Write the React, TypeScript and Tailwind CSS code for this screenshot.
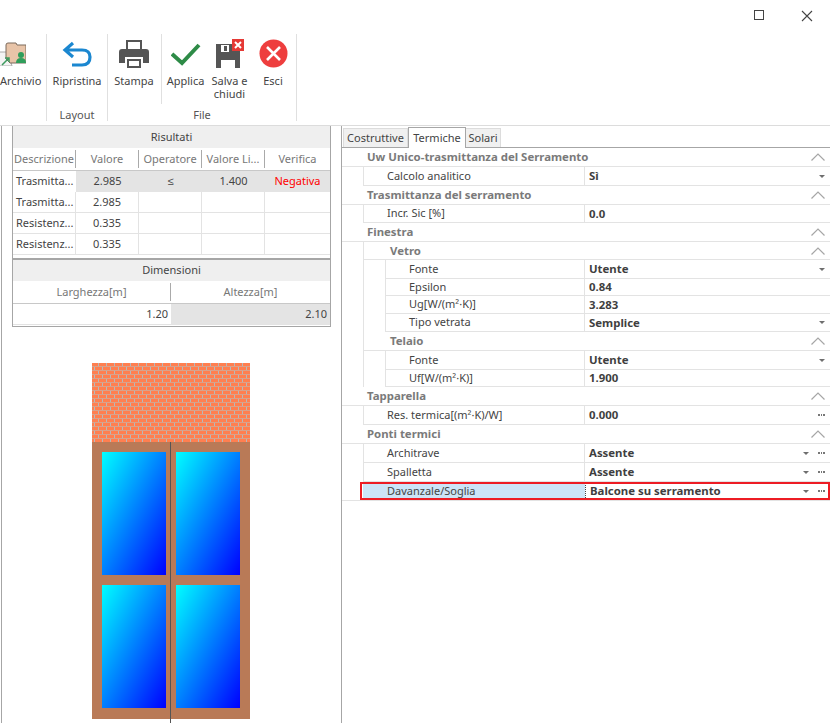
import React from "react";

const font = { fontFamily: '"Noto Sans", sans-serif' };

const results = [
  { d: "Trasmitta...", v: "2.985", o: "≤", l: "1.400", r: "Negativa", sel: true },
  { d: "Trasmitta...", v: "2.985", o: "", l: "", r: "" },
  { d: "Resistenz...", v: "0.335", o: "", l: "", r: "" },
  { d: "Resistenz...", v: "0.335", o: "", l: "", r: "" },
];

function Chevron() {
  return (
    <svg width="14" height="8" viewBox="0 0 14 8" className="mr-[5px] shrink-0">
      <path d="M0.5 7.5 L7 1 L13.5 7.5" fill="none" stroke="#a6a6a6" strokeWidth="1.2" />
    </svg>
  );
}

function Caret() {
  return <span className="w-0 h-0 border-x-[3px] border-x-transparent border-t-[3px] border-t-[#6e6e6e]" />;
}

function Dots() {
  return (
    <span className="flex gap-px w-[7px]">
      <span className="w-[2px] h-[2px] bg-[#777]" />
      <span className="w-[2px] h-[2px] bg-[#777]" />
      <span className="w-[2px] h-[2px] bg-[#777]" />
    </span>
  );
}

function Cat({ label, level = 0, h }: { label: string; level?: number; h: string }) {
  return (
    <div className={`flex items-center ${h} border-b border-[#e3e3e3] ${level ? "ml-[21px] border-l pl-[26px]" : "pl-[25px]"}`}>
      <span className="flex-1 font-bold text-[11.4px] text-[#7a7a7a]">{label}</span>
      <Chevron />
    </div>
  );
}

function Row({ label, value, level = 0, h, caret, dots }: { label: string; value: string; level?: number; h: string; caret?: boolean; dots?: boolean }) {
  return (
    <div className={`flex ${h} ${level ? "ml-[21px] border-l border-[#e3e3e3]" : ""}`}>
      <div className="ml-[21px] flex flex-1 border-l border-b border-[#e3e3e3]">
        <div className={`flex items-center border-r border-[#e3e3e3] ${level ? "w-[199px] pl-[23px]" : "w-[221px] pl-[23px]"} text-[#444]`}>{label}</div>
        <div className="flex flex-1 items-center pl-[4px] font-bold text-[11.4px] text-[#3f3f3f]">
          <span className="flex-1">{value}</span>
          <span className="flex items-center gap-[9px] pr-[5px]">
            {caret && <Caret />}
            {dots && <Dots />}
          </span>
        </div>
      </div>
    </div>
  );
}

function Tool({ label, icon, w }: { label: string; icon: React.ReactNode; w: string }) {
  return (
    <div className={`flex flex-col items-center ${w}`}>
      <div className="h-[31px] mt-[4px] flex items-center justify-center">{icon}</div>
      <div className="mt-[5px] text-center leading-[13px] text-[#444]">{label}</div>
    </div>
  );
}

function WindowDrawing() {
  return (
    <svg width="158" height="361" viewBox="0 0 158 361" className="block" shapeRendering="crispEdges">
      <defs>
        <pattern id="brick" width="8" height="8" patternUnits="userSpaceOnUse">
          <rect width="8" height="8" fill="#ff7f50" />
          <rect y="3" width="8" height="1" fill="#d8a28c" />
          <rect y="7" width="8" height="1" fill="#d8a28c" />
          <rect x="6" y="0" width="1" height="3" fill="#b8b8b8" />
          <rect x="2" y="4" width="1" height="3" fill="#b8b8b8" />
        </pattern>
        <linearGradient id="glass" x1="0" y1="0" x2="1" y2="1">
          <stop offset="0" stopColor="#00ffff" />
          <stop offset="1" stopColor="#0000ff" />
        </linearGradient>
      </defs>
      <rect width="158" height="79" fill="url(#brick)" />
      <rect y="79" width="158" height="277" fill="#b97a57" />
      <rect x="78" y="79" width="1" height="282" fill="#555" />
      <rect x="10" y="89" width="64" height="123" fill="url(#glass)" />
      <rect x="84" y="89" width="64" height="123" fill="url(#glass)" />
      <rect x="10" y="222" width="64" height="123" fill="url(#glass)" />
      <rect x="84" y="222" width="64" height="123" fill="url(#glass)" />
    </svg>
  );
}

export default function App() {
  return (
    <div className="w-[830px] h-[723px] overflow-hidden bg-white text-[11px] flex flex-col" style={font}>
      {/* title bar + ribbon */}
      <div className="h-[126px] shrink-0 border-b border-[#dcdcdc]">
        <div className="h-[34px] flex justify-end items-start pt-[10px]">
          <svg width="11" height="11" viewBox="0 0 11 11" className="mr-[36px]">
            <rect x="0.5" y="0.5" width="9" height="9" fill="none" stroke="#444" />
          </svg>
          <svg width="12" height="12" viewBox="0 0 12 12" className="mr-[17px]">
            <path d="M1 1 L11 11 M11 1 L1 11" stroke="#444" strokeWidth="1.1" />
          </svg>
        </div>
        <div className="flex h-[87px]">
          <div className="w-[47px] border-r border-[#e0e0e0] overflow-hidden flex flex-col">
            <div className="pt-[6px] h-[31px]">
              <svg width="26" height="26" viewBox="0 0 26 26">
                <path d="M-2 12 L8 12 L12 26 L-2 26 Z" fill="#f3f3f3" stroke="#aaa" />
                <path d="M6 5 Q6 3 8 3 L16 3 L17 5 L26 5 L26 23 L10 23 L6 19 Z" fill="#e8c4a8" stroke="#7b6a5c" />
                <circle cx="21" cy="15" r="3" fill="#2f9e5b" />
                <path d="M16 23 Q16 18 21 18 Q26 18 26 23 Z" fill="#2f9e5b" />
                <path d="M2 25 L9 18 M5 18 L9 18 L9 22" stroke="#3c9a5f" strokeWidth="1.5" fill="none" />
              </svg>
            </div>
            <div className="mt-[9px] text-[#444] leading-[13px]">Archivio</div>
          </div>
          <div className="w-[61px] border-r border-[#e0e0e0] flex flex-col items-center">
            <Tool
              w="w-full h-[77px]"
              label="Ripristina"
              icon={
                <svg width="30" height="26" viewBox="0 0 30 26">
                  <path d="M11 2 L3 9 L11 16 M4 9 L20 9 Q28 9 28 16 Q28 24 20 24 L10 24" fill="none" stroke="#1b87d0" strokeWidth="3.2" />
                </svg>
              }
            />
            <div className="text-[#555] leading-[13px]">Layout</div>
          </div>
          <div className="w-[189px] border-r border-[#e0e0e0] flex flex-col items-center">
            <div className="flex h-[77px]">
              <Tool
                w="w-[53px]"
                label="Stampa"
                icon={
                  <svg width="30" height="30" viewBox="0 0 30 30">
                    <path d="M7 1 H23 V10 H21 V3 H9 V10 H7 Z" fill="#555" />
                    <path d="M0 13 Q0 10 3 10 H27 Q30 10 30 13 V24 H24 V18 H6 V24 H0 Z" fill="#555" />
                    <path d="M8 20 H22 V29 H8 Z" fill="#555" />
                    <rect x="10" y="22" width="10" height="5" fill="#fff" />
                  </svg>
                }
              />
              <div className="w-px h-[70px] bg-[#e0e0e0]" />
              <Tool
                w="w-[48px]"
                label="Applica"
                icon={
                  <svg width="30" height="24" viewBox="0 0 30 24">
                    <path d="M1 12 L11 21 L28 3" fill="none" stroke="#2e8b47" strokeWidth="4" />
                  </svg>
                }
              />
              <Tool
                w="w-[40px]"
                label="Salva e chiudi"
                icon={
                  <svg width="30" height="30" viewBox="0 0 30 30">
                    <path d="M1 5 H18 V12 H25 V29 H1 Z" fill="#555" />
                    <rect x="6" y="6" width="8" height="7" fill="#fff" />
                    <rect x="9" y="7" width="3" height="5" fill="#555" />
                    <rect x="6" y="21" width="14" height="8" fill="#fff" />
                    <rect x="17" y="0" width="12" height="12" fill="#e53935" />
                    <path d="M20 3 L26 9 M26 3 L20 9" stroke="#fff" strokeWidth="2" />
                  </svg>
                }
              />
              <Tool
                w="w-[47px]"
                label="Esci"
                icon={
                  <svg width="29" height="29" viewBox="0 0 29 29">
                    <circle cx="14.5" cy="14.5" r="14" fill="#ee3e3e" />
                    <path d="M8 8 L21 21 M21 8 L8 21" stroke="#fff" strokeWidth="2.6" />
                  </svg>
                }
              />
            </div>
            <div className="text-[#555] leading-[13px]">File</div>
          </div>
        </div>
      </div>

      <div className="flex flex-1 min-h-0">
        {/* left panel */}
        <div className="w-[342px] shrink-0 border-r border-[#a6a6a6] flex flex-col">
          <div className="flex flex-1">
            <div className="w-[2px] border-r border-[#a6a6a6]" />
            <div className="flex-1 flex flex-col items-start pl-[10px]">
              <div className="w-[319px] border border-[#a6a6a6] border-t-0 text-[#444]">
                <div className="h-[22px] bg-[#efefef] flex items-center justify-center">Risultati</div>
                <div className="h-[23px] flex items-center border-b border-[#c8c8c8] text-[#777]">
                  {["Descrizione", "Valore", "Operatore", "Valore Li...", "Verifica"].map((h, i) => (
                    <div key={h} className={`${i === 4 ? "flex-1" : "w-[63px] border-r border-[#aaa]"} h-[18px] flex items-center justify-center`}>{h}</div>
                  ))}
                </div>
                {results.map((r, i) => (
                  <div key={i} className={`flex h-[21px] ${r.sel ? "bg-[#e4e4e4]" : "border-b border-[#e3e3e3]"}`}>
                    <div className={`w-[63px] pl-[3px] flex items-center ${r.sel ? "bg-white" : "border-r border-[#e3e3e3]"}`}>{r.d}</div>
                    <div className={`w-[63px] flex items-center justify-center ${r.sel ? "" : "border-r border-[#e3e3e3]"}`}>{r.v}</div>
                    <div className={`w-[63px] flex items-center justify-center ${r.sel ? "" : "border-r border-[#e3e3e3]"}`}>{r.o}</div>
                    <div className={`w-[63px] flex items-center justify-center ${r.sel ? "" : "border-r border-[#e3e3e3]"}`}>{r.l}</div>
                    <div className="flex-1 flex items-center justify-center text-[#ff0000]">{r.r}</div>
                  </div>
                ))}
                <div className="h-[3px]" />
                <div className="h-[23px] bg-[#efefef] border-t-2 border-[#a6a6a6] flex items-center justify-center">Dimensioni</div>
                <div className="h-[23px] flex items-center border-b border-[#c8c8c8] text-[#777]">
                  <div className="w-[158px] h-[18px] border-r border-[#aaa] flex items-center justify-center">Larghezza[m]</div>
                  <div className="flex-1 flex items-center justify-center">Altezza[m]</div>
                </div>
                <div className="flex h-[21px] border-b border-[#e3e3e3]">
                  <div className="w-[158px] flex items-center justify-end pr-[3px]">1.20</div>
                  <div className="flex-1 bg-[#e4e4e4] flex items-center justify-end pr-[3px]">2.10</div>
                </div>
                <div className="h-[1px]" />
              </div>
              <div className="mt-[36px] ml-[80px]">
                <WindowDrawing />
              </div>
            </div>
          </div>
        </div>

        {/* right panel */}
        <div className="flex-1 min-w-0 flex flex-col">
          <div className="h-[22px] flex items-end pl-[1px] border-b border-[#a6a6a6] text-[#444]">
            <div className="h-[19px] w-[65px] bg-[#f0f0f0] border border-b-0 border-[#dcdcdc] flex items-center justify-center">Costruttive</div>
            <div className="h-[21px] -mb-px w-[58px] bg-white border border-b-0 border-[#a6a6a6] flex items-center justify-center">Termiche</div>
            <div className="h-[19px] w-[35px] bg-[#f0f0f0] border border-b-0 border-l-0 border-[#dcdcdc] flex items-center justify-center">Solari</div>
          </div>
          <Cat label="Uw Unico-trasmittanza del Serramento" h="h-[19px]" />
          <Row label="Calcolo analitico" value="Sì" h="h-[19px]" caret />
          <Cat label="Trasmittanza del serramento" h="h-[19px]" />
          <Row label="Incr. Sic [%]" value="0.0" h="h-[18px]" />
          <Cat label="Finestra" h="h-[19px]" />
          <Cat label="Vetro" level={1} h="h-[18px]" />
          <Row label="Fonte" value="Utente" level={1} h="h-[19px]" caret />
          <Row label="Epsilon" value="0.84" level={1} h="h-[17px]" />
          <Row label="Ug[W/(m²·K)]" value="3.283" level={1} h="h-[18px]" />
          <Row label="Tipo vetrata" value="Semplice" level={1} h="h-[18px]" caret />
          <Cat label="Telaio" level={1} h="h-[19px]" />
          <Row label="Fonte" value="Utente" level={1} h="h-[19px]" caret />
          <Row label="Uf[W/(m²·K)]" value="1.900" level={1} h="h-[17px]" />
          <Cat label="Tapparella" h="h-[19px]" />
          <Row label="Res. termica[(m²·K)/W]" value="0.000" h="h-[19px]" dots />
          <Cat label="Ponti termici" h="h-[19px]" />
          <Row label="Architrave" value="Assente" h="h-[19px]" caret dots />
          <Row label="Spalletta" value="Assente" h="h-[19px]" caret dots />
          <div className="h-[19px] flex border-b border-[#e3e3e3] relative">
            <div className="ml-[21px] w-[222px] bg-[#cce4f7] pl-[24px] flex items-center text-[#444]">Davanzale/Soglia</div>
            <div className="flex flex-1 items-center pl-[4px] font-bold text-[11.4px] text-[#3f3f3f] border-l border-dotted border-[#444]">
              <span className="flex-1">Balcone su serramento</span>
              <span className="flex items-center gap-[9px] pr-[5px]">
                <Caret />
                <Dots />
              </span>
            </div>
            <div className="absolute left-[18px] right-0 top-0 bottom-0 border-2 border-[#ed1c24] pointer-events-none" />
          </div>
        </div>
      </div>
    </div>
  );
}
